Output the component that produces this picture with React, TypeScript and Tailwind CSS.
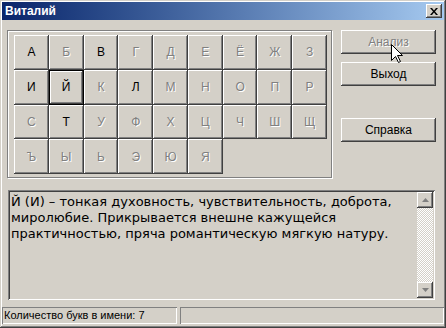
const LETTERS = "АБВГДЕЁЖЗИЙКЛМНОПРСТУФХЦЧШЩЪЫЬЭЮЯ".split("");
const ACTIVE = new Set(["А", "В", "И", "Й", "Л", "Т"]);

const bevel = "shadow-[inset_-1px_-1px_#404040,inset_1px_1px_#fff,inset_-2px_-2px_#808080]";

function LetterKey({ ch }: { ch: string }) {
  const on = ACTIVE.has(ch);
  const isDefault = ch === "Й";
  return (
    <div
      className={`flex items-center justify-center bg-[#d4d0c8] text-[12px] ${bevel} ${
        isDefault ? "border border-black" : ""
      } ${on ? "text-black" : "text-[#808080] [text-shadow:1px_1px_0_#fff]"}`}
    >
      {ch}
    </div>
  );
}

function PushButton({ label, disabled, className = "" }: { label: string; disabled?: boolean; className?: string }) {
  return (
    <div
      className={`w-[95px] h-[24px] flex items-center justify-center bg-[#d4d0c8] text-[12px] ${bevel} ${
        disabled ? "text-[#808080] [text-shadow:1px_1px_0_#fff]" : "text-black"
      } ${className}`}
    >
      {label}
    </div>
  );
}

function Arrow({ up }: { up?: boolean }) {
  return (
    <svg width="7" height="4" viewBox="0 0 7 4">
      {up ? <path d="M3.5 0 L7 4 L0 4 Z" fill="#808080" /> : <path d="M0 0 L7 0 L3.5 4 Z" fill="#808080" />}
    </svg>
  );
}

export default function App() {
  return (
    <div className="relative w-[446px] h-[328px] p-[2px] flex flex-col bg-[#d4d0c8] shadow-[inset_-1px_-1px_#404040,inset_1px_1px_#d4d0c8,inset_-2px_-2px_#808080,inset_2px_2px_#fff] font-['Liberation_Sans',Arial,sans-serif] text-[11px] text-black overflow-hidden">
      {/* title bar */}
      <div className="h-[18px] flex items-center justify-between bg-gradient-to-r from-[#0a246a] to-[#a6caf0] pl-[3px] pr-[2px]">
        <span className="text-white font-bold text-[12px] leading-none">Виталий</span>
        <div className={`w-[16px] h-[14px] flex items-center justify-center bg-[#d4d0c8] ${bevel}`}>
          <svg width="8" height="7" viewBox="0 0 8 7">
            <path d="M0 0h2l2 2.5L6 0h2L5 3.5 8 7H6L4 4.5 2 7H0l3-3.5z" fill="#000" />
          </svg>
        </div>
      </div>

      {/* letters + buttons */}
      <div className="flex pl-[5px] pt-[10px]">
        <div className="w-[325px] h-[148px] border border-[#808080] shadow-[inset_1px_1px_#fff,1px_1px_#fff] pl-[6px] pt-[4px]">
          <div className="grid grid-cols-9 grid-rows-4 w-[313px] h-[139px]">
            {LETTERS.map((ch) => (
              <LetterKey key={ch} ch={ch} />
            ))}
          </div>
        </div>
        <div className="ml-[9px] flex flex-col">
          <PushButton label="Анализ" disabled />
          <PushButton label="Выход" className="mt-[8px]" />
          <PushButton label="Справка" className="mt-[32px]" />
        </div>
      </div>

      {/* description */}
      <div className="mt-[12px] ml-[6px] w-[427px] h-[110px] flex p-[2px] bg-[#d4d0c8] shadow-[inset_1px_1px_#808080,inset_-1px_-1px_#fff,inset_2px_2px_#404040,inset_-2px_-2px_#d4d0c8]">
        <div className="flex-1 pl-[1px] pt-[2px] font-['DejaVu_Sans',Verdana,sans-serif] text-[13px] leading-[16px] text-black">
          <div>Й (И) – тонкая духовность, чувствительность, доброта,</div>
          <div>миролюбие. Прикрывается внешне кажущейся</div>
          <div>практичностью, пряча романтическую мягкую натуру.</div>
        </div>
        <div className="w-[16px] flex flex-col bg-[repeating-conic-gradient(#fff_0_25%,#d4d0c8_0_50%)] bg-[length:2px_2px]">
          <div className={`h-[16px] flex items-center justify-center bg-[#d4d0c8] ${bevel}`}>
            <Arrow up />
          </div>
          <div className="flex-1" />
          <div className={`h-[16px] flex items-center justify-center bg-[#d4d0c8] ${bevel}`}>
            <Arrow />
          </div>
        </div>
      </div>

      {/* status bar */}
      <div className="mt-[7px] h-[17px] flex gap-[3px]">
        <div className="w-[175px] flex items-center pl-[2px] shadow-[inset_1px_1px_#808080,inset_-1px_-1px_#fff]">
          Количество букв в имени: 7
        </div>
        <div className="flex-1 shadow-[inset_1px_1px_#808080,inset_-1px_-1px_#fff]" />
      </div>

      {/* mouse pointer */}
      <svg className="absolute left-[391px] top-[44px]" width="12" height="20" viewBox="0 0 12 20">
        <path d="M0.5 0.5 L0.5 16.5 L4.5 12.5 L7.5 18.5 L9.5 17.5 L6.5 11.5 L11.5 11.5 Z" fill="#fff" stroke="#000" strokeWidth="1" />
      </svg>
    </div>
  );
}
